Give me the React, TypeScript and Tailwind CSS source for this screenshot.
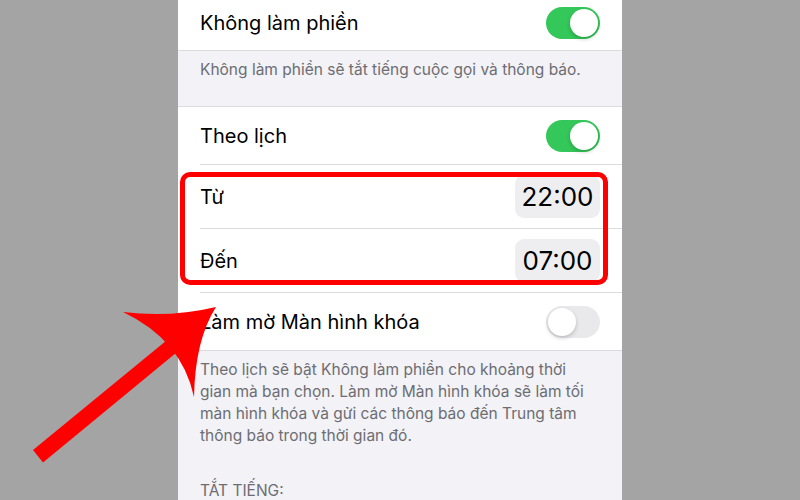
import React from "react"

function Toggle({ on }: { on: boolean }) {
  return (
    <div
      className={`relative h-[32px] w-[54px] shrink-0 rounded-full ${on ? "bg-[#34c759]" : "bg-[#e9e9eb]"}`}
    >
      <div
        className={`absolute top-[2px] h-[28px] w-[28px] rounded-full bg-white shadow-[0_2px_4px_rgba(0,0,0,0.2)] ${on ? "right-[2px]" : "left-[2px]"}`}
      />
    </div>
  )
}

function Row({
  label,
  height,
  last,
  children,
}: {
  label: string
  height: string
  last?: boolean
  children: React.ReactNode
}) {
  return (
    <div className={`flex pl-[22px] ${height}`}>
      <div
        className={`flex flex-1 items-center justify-between pr-[22px] ${last ? "" : "border-b border-[#dcdce0]"}`}
      >
        <span className="text-[20px] text-black">{label}</span>
        {children}
      </div>
    </div>
  )
}

function TimePill({ value }: { value: string }) {
  return (
    <div className="flex h-[43px] w-[85px] items-center justify-center rounded-[9px] bg-[#eeeef0] text-[26px] text-black">
      {value}
    </div>
  )
}

export default function App() {
  return (
    <div className="relative flex h-[500px] w-[800px] overflow-hidden bg-[#a4a4a4] font-['Inter',sans-serif]">
      <div className="w-[178px] shrink-0" />
      <div className="w-[444px] shrink-0 bg-[#f2f2f7]">
        <div className="flex h-[51px] items-center justify-between border-b border-[#dcdce0] bg-white px-[22px] pb-[4px]">
          <span className="text-[20px] text-black">Không làm phiền</span>
          <Toggle on />
        </div>
        <div className="h-[55px] px-[22px] pt-[8px] text-[15.5px] leading-[22px] text-[#6d6d72]">
          Không làm phiền sẽ tắt tiếng cuộc gọi và thông báo.
        </div>
        <div className="border-y border-[#dcdce0] bg-white">
          <Row label="Theo lịch" height="h-[58px]">
            <Toggle on />
          </Row>
          <Row label="Từ" height="h-[64px]">
            <TimePill value="22:00" />
          </Row>
          <Row label="Đến" height="h-[64px]">
            <TimePill value="07:00" />
          </Row>
          <Row label="Làm mờ Màn hình khóa" height="h-[57px]" last>
            <Toggle on={false} />
          </Row>
        </div>
        <div className="px-[22px] pt-[8px] text-[15.5px] leading-[22px] text-[#6d6d72]">
          <p>
            Theo lịch sẽ bật Không làm phiền cho khoảng thời gian mà bạn chọn. Làm mờ Màn hình khóa sẽ làm tối
            màn hình khóa và gửi các thông báo đến Trung tâm thông báo trong thời gian đó.
          </p>
          <p className="mt-[33px]">TẮT TIẾNG:</p>
        </div>
      </div>
      <div className="flex-1" />

      <div className="pointer-events-none absolute left-[180px] top-[172px] h-[113px] w-[428px] rounded-[10px] border-[5px] border-[#ff0000]" />

      <svg className="pointer-events-none absolute left-0 top-0" width="800" height="500" viewBox="0 0 800 500">
        <polygon points="33,450 43,462.5 185,345.5 175,333.5" fill="#ff0000" />
        <path d="M123,312 Q170,318 216,307 Q195,340 194,397 Q182,340 123,312 Z" fill="#ff0000" />
      </svg>
    </div>
  )
}
